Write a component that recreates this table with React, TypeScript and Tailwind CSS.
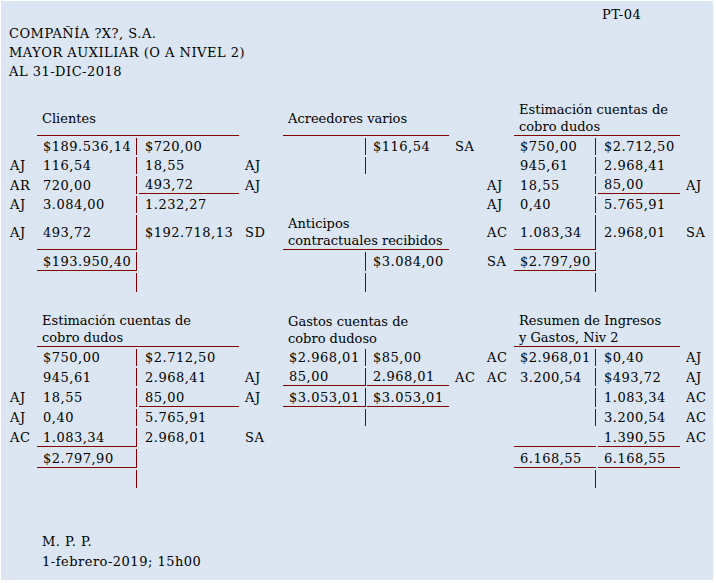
import clsx from "clsx"

type Row = {
  h: string
  l?: string
  a?: string
  c?: string
  r?: string
  v?: boolean
  ab?: boolean
  cb?: boolean
  title?: string[]
  tl?: boolean
}

type Size = { a: string; c: string; gap: string; t: string }

const wide: Size = { a: "w-[100px]", c: "w-[100px]", gap: "gap-[2px]", t: "w-[202px]" }
const midCol: Size = { a: "w-[83px]", c: "w-[82px]", gap: "gap-px", t: "w-[166px]" }
const rightCol: Size = { a: "w-[82px]", c: "w-[82px]", gap: "gap-[2px]", t: "w-[166px]" }

// row heights for the upper and lower block of T accounts
const up = ["h-[35px]", "h-[17px]", "h-[17px]", "h-[18px]", "h-[17px]", "h-[35px]", "h-[19px]", "h-[19px]"]
const lo = ["h-[35px]", "h-[17px]", "h-[18px]", "h-[19px]", "h-[17px]", "h-[19px]", "h-[19px]", "h-[18px]"]

const red = "border-[#800000]"

function TAccount({ rows, size, labels }: { rows: Row[]; size: Size; labels?: boolean }) {
  return (
    <div className="flex flex-col gap-[2px]">
      {rows.map((row, i) => (
        <div key={i} className={clsx("flex tracking-[0.5px]", row.h)}>
          {labels && <div className="flex w-[27px] shrink-0 items-center">{row.l}</div>}
          {row.title ? (
            <div
              className={clsx(
                size.t,
                "flex shrink-0 flex-col justify-center pl-[5px] leading-[17px] tracking-normal",
                row.tl && clsx("border-b", red)
              )}
            >
              {row.title.map((t) => (
                <div key={t}>{t}</div>
              ))}
            </div>
          ) : (
            <div className={clsx("flex shrink-0", size.gap)}>
              <div
                className={clsx(
                  size.a,
                  "flex items-center pl-[6px]",
                  row.v && clsx("border-r", red),
                  row.ab && clsx("border-b", red)
                )}
              >
                {row.a}
              </div>
              <div className={clsx(size.c, "flex items-center pl-[6px]", row.cb && clsx("border-b", red))}>
                {row.c}
              </div>
            </div>
          )}
          <div className="flex items-center pl-[6px]">{row.r}</div>
        </div>
      ))}
    </div>
  )
}

function withHeights(rows: Omit<Row, "h">[], hs: string[]): Row[] {
  return rows.map((r, i) => ({ ...r, h: hs[i] }))
}

const clientes = withHeights(
  [
    { title: ["Clientes"], tl: true },
    { a: "$189.536,14", v: true, c: "$720,00" },
    { l: "AJ", a: "116,54", v: true, c: "18,55", r: "AJ" },
    { l: "AR", a: "720,00", v: true, c: "493,72", cb: true, r: "AJ" },
    { l: "AJ", a: "3.084,00", v: true, c: "1.232,27" },
    { l: "AJ", a: "493,72", v: true, ab: true, c: "$192.718,13", r: "SD" },
    { a: "$193.950,40", v: true, ab: true },
    { v: true },
  ],
  up
)

const acreedores = withHeights(
  [
    { title: ["Acreedores varios"], tl: true },
    { v: true, c: "$116,54", r: "SA" },
    { v: true },
    {},
    {},
    { title: ["Anticipos", "contractuales recibidos"], tl: true },
    { v: true, c: "$3.084,00" },
    { v: true },
  ],
  up
)

const estimacionTop = withHeights(
  [
    { title: ["Estimación cuentas de", "cobro dudos"], tl: true },
    { a: "$750,00", v: true, c: "$2.712,50" },
    { a: "945,61", v: true, c: "2.968,41" },
    { l: "AJ", a: "18,55", v: true, c: "85,00", cb: true, r: "AJ" },
    { l: "AJ", a: "0,40", v: true, c: "5.765,91" },
    { l: "AC", a: "1.083,34", v: true, ab: true, c: "2.968,01", r: "SA" },
    { l: "SA", a: "$2.797,90", v: true, ab: true },
    { v: true },
  ],
  up
)

const estimacionBottom = withHeights(
  [
    { title: ["Estimación cuentas de", "cobro dudos"], tl: true },
    { a: "$750,00", v: true, c: "$2.712,50" },
    { a: "945,61", v: true, c: "2.968,41", r: "AJ" },
    { l: "AJ", a: "18,55", v: true, c: "85,00", cb: true, r: "AJ" },
    { l: "AJ", a: "0,40", v: true, c: "5.765,91" },
    { l: "AC", a: "1.083,34", v: true, ab: true, c: "2.968,01", r: "SA" },
    { a: "$2.797,90", v: true, ab: true },
    { v: true },
  ],
  lo
)

const gastos = withHeights(
  [
    { title: ["Gastos cuentas de", "cobro dudoso"] },
    { a: "$2.968,01", v: true, c: "$85,00" },
    { a: "85,00", v: true, ab: true, c: "2.968,01", cb: true, r: "AC" },
    { a: "$3.053,01", v: true, ab: true, c: "$3.053,01", cb: true },
    { v: true },
  ],
  lo
)

const resumen = withHeights(
  [
    { title: ["Resumen de Ingresos", "y Gastos, Niv 2"], tl: true },
    { l: "AC", a: "$2.968,01", v: true, c: "$0,40", r: "AJ" },
    { l: "AC", a: "3.200,54", v: true, c: "$493,72", r: "AJ" },
    { v: true, c: "1.083,34", r: "AC" },
    { v: true, c: "3.200,54", r: "AC" },
    { ab: true, c: "1.390,55", cb: true, r: "AC" },
    { a: "6.168,55", ab: true, c: "6.168,55", cb: true },
    { v: true },
  ],
  lo
)

export default function App() {
  return (
    <div className="h-[583px] w-[716px] bg-white pl-px pt-px">
      <div className="h-[579px] w-[712px] whitespace-nowrap bg-[#dce6f2] pt-[4px] font-['DejaVu_Serif',serif] text-[13px] leading-[19px] text-black">
        <div className="pl-[601px] tracking-[0.5px]">PT-04</div>
        <div className="pl-[8px] tracking-[0.5px]">
          <div>COMPAÑÍA ?X?, S.A.</div>
          <div>MAYOR AUXILIAR (O A NIVEL 2)</div>
          <div>AL 31-DIC-2018</div>
        </div>

        <div className="mt-[20px] flex pl-[9px]">
          <div className="w-[273px] shrink-0">
            <TAccount rows={clientes} size={wide} labels />
          </div>
          <div className="w-[204px] shrink-0">
            <TAccount rows={acreedores} size={midCol} />
          </div>
          <div>
            <TAccount rows={estimacionTop} size={rightCol} labels />
          </div>
        </div>

        <div className="mt-[20px] flex pl-[9px]">
          <div className="w-[273px] shrink-0">
            <TAccount rows={estimacionBottom} size={wide} labels />
          </div>
          <div className="w-[204px] shrink-0">
            <TAccount rows={gastos} size={midCol} />
          </div>
          <div>
            <TAccount rows={resumen} size={rightCol} labels />
          </div>
        </div>

        <div className="mt-[44px] pl-[41px] leading-[20px] tracking-[0.5px]">
          <div>M. P. P.</div>
          <div>1-febrero-2019; 15h00</div>
        </div>
      </div>
    </div>
  )
}
